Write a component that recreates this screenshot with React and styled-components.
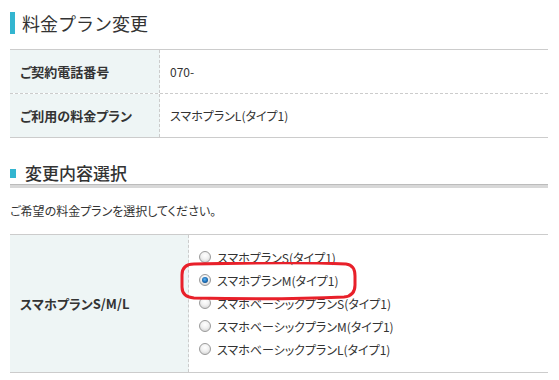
import React from "react";
import styled, { createGlobalStyle } from "styled-components";

const Global = createGlobalStyle`
  html, body { margin: 0; padding: 0; background: #fff; }
  body {
    font-family: "Noto Sans CJK JP", "Noto Sans", sans-serif;
    color: #333;
    font-size: 12px;
  }
`;

const Page = styled.div`
  width: 538px;
  padding: 12px 0 0 10px;
  position: relative;
`;

const Title = styled.h1`
  margin: 0 0 15px;
  height: 22px;
  border-left: 5px solid #33b5d0;
  padding-left: 7px;
  font-size: 18px;
  line-height: 22px;
  font-weight: 400;
  color: #333;
`;

const Table = styled.div`
  border-top: 1px solid #cccccc;
  border-bottom: 1px solid #cccccc;
  position: relative;
`;

const Row = styled.div`
  display: grid;
  grid-template-columns: ${(p) => p.$label}px 1fr;
  height: ${(p) => p.$h}px;
  & + & {
    border-top: 1px dashed #cccccc;
  }
`;

const Label = styled.div`
  background: #eef5f5;
  border-right: 1px dashed #cccccc;
  display: flex;
  align-items: center;
  padding-left: 10px;
  font-size: 13px;
  font-weight: 700;
  font-feature-settings: "palt";
`;

const Value = styled.div`
  display: flex;
  align-items: center;
  padding-left: 10px;
  font-size: 12px;
  font-feature-settings: "palt";
`;

const SubHeading = styled.h2`
  margin: 22px 0 0;
  height: 24px;
  display: flex;
  align-items: center;
  gap: 9px;
  font-size: 17px;
  font-weight: 500;
  color: #333;
`;

const Square = styled.span`
  width: 6px;
  height: 9px;
  background: #33b5d0;
  margin-top: 2px;
`;

const Rule = styled.div`
  height: 3px;
  background: #d8d8d8;
  border-top: 1px solid #bcbcbc;
`;

const Lead = styled.p`
  margin: 14px 0;
  line-height: 18px;
  font-size: 12px;
  font-feature-settings: "palt";
`;

const Options = styled.div`
  display: flex;
  flex-direction: column;
  justify-content: center;
  padding-left: 10px;
  gap: 5px;
  padding-bottom: 1px;
`;

const Option = styled.label`
  display: flex;
  align-items: center;
  gap: 6px;
  height: 18px;
  font-size: 12px;
  font-feature-settings: "palt";
`;

const Radio = styled.span`
  width: 12px;
  height: 12px;
  border-radius: 50%;
  border: 1px solid #9a9a9a;
  box-sizing: border-box;
  background: radial-gradient(circle at 50% 35%, #ffffff 0%, #f1f1f1 45%, #c9c9c9 100%);
  display: flex;
  align-items: center;
  justify-content: center;
  &::after {
    content: "";
    display: ${(p) => (p.$checked ? "block" : "none")};
    width: 6px;
    height: 6px;
    border-radius: 50%;
    background: radial-gradient(circle at 45% 40%, #5fb4f0 0%, #1b6fb8 50%, #0c2f5c 100%);
  }
`;

const Marker = styled.svg`
  position: absolute;
  left: 168px;
  top: 27px;
  pointer-events: none;
`;

const plans = [
  "スマホプランS(タイプ1)",
  "スマホプランM(タイプ1)",
  "スマホベーシックプランS(タイプ1)",
  "スマホベーシックプランM(タイプ1)",
  "スマホベーシックプランL(タイプ1)",
];

export default function App() {
  return (
    <>
      <Global />
      <Page>
        <Title>料金プラン変更</Title>
        <Table>
          <Row $label={150} $h={43}>
            <Label>ご契約電話番号</Label>
            <Value>070-</Value>
          </Row>
          <Row $label={150} $h={43}>
            <Label>ご利用の料金プラン</Label>
            <Value>スマホプランL(タイプ1)</Value>
          </Row>
        </Table>
        <SubHeading>
          <Square />
          変更内容選択
        </SubHeading>
        <Rule />
        <Lead>ご希望の料金プランを選択してください。</Lead>
        <Table>
          <Row $label={179} $h={137}>
            <Label>スマホプランS/M/L</Label>
            <Options>
              {plans.map((p, i) => (
                <Option key={p}>
                  <Radio $checked={i === 1} />
                  {p}
                </Option>
              ))}
            </Options>
          </Row>
          <Marker width="182" height="40" viewBox="0 0 182 40">
            <path
              d="M16 2 C62 1 125 0 168 2 Q177 3 177 14 L177 23 Q177 34 166 35 C122 37 62 37 16 36 Q4 35 4 25 L4 13 Q4 2 16 2 Z"
              fill="none"
              stroke="#e8202a"
              strokeWidth="3"
            />
          </Marker>
        </Table>
      </Page>
    </>
  );
}
